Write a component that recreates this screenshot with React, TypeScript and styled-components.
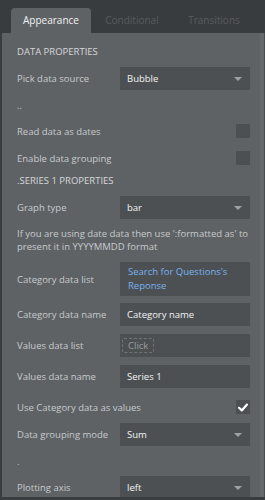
import { createGlobalStyle, styled } from 'styled-components';

const GlobalStyle = createGlobalStyle`
  html, body {
    margin: 0;
    padding: 0;
    background: #2f3234;
  }
  * {
    box-sizing: border-box;
  }
`;

const Frame = styled.div`
  width: 265px;
  height: 500px;
  overflow: hidden;
  background: #3a3d40;
  font-family: 'Open Sans', 'Noto Sans', sans-serif;
  font-size: 9.5px;
`;

const TabBar = styled.div`
  display: flex;
  align-items: flex-end;
  height: 33px;
  padding-left: 11px;
  background: #393c3f;
`;

const Tab = styled.div<{ $active?: boolean }>`
  display: flex;
  align-items: center;
  justify-content: center;
  height: 25px;
  padding-bottom: 1px;
  width: ${(p) => (p.$active ? '80px' : '82px')};
  border-radius: 4px 4px 0 0;
  background: ${(p) => (p.$active ? '#5e6265' : 'transparent')};
  color: ${(p) => (p.$active ? '#f2f2f2' : '#575b5e')};
  font-size: 10px;
`;

const Body = styled.div`
  display: flex;
  height: 464px;
  margin-left: 2px;
`;

const Panel = styled.div`
  flex: 1;
  display: flex;
  flex-direction: column;
  padding: 0 10px 0 15px;
  background: #5e6265;
  overflow: hidden;
`;

const ScrollTrack = styled.div`
  width: 5px;
  background: #66696c;
  border-right: 1px solid #4a4d50;
`;

const SectionTitle = styled.div<{ $mt: number }>`
  height: 16px;
  line-height: 16px;
  margin-top: ${(p) => p.$mt}px;
  color: #d6d8d9;
  white-space: nowrap;
`;

const Note = styled.div<{ $mt: number }>`
  height: 16px;
  line-height: 16px;
  margin-top: ${(p) => p.$mt}px;
  color: #c4c6c8;
`;

const HelpText = styled.div<{ $mt: number }>`
  margin-top: ${(p) => p.$mt}px;
  line-height: 13px;
  color: #c8cacc;
`;

const Row = styled.div<{ $mt: number }>`
  display: flex;
  align-items: center;
  margin-top: ${(p) => p.$mt}px;
`;

const Label = styled.div`
  flex: 1;
  color: #c8cacc;
  white-space: nowrap;
`;

const Field = styled.div<{ $tall?: boolean }>`
  flex-shrink: 0;
  display: flex;
  align-items: center;
  justify-content: space-between;
  width: 130px;
  height: ${(p) => (p.$tall ? '34px' : '23px')};
  padding: 0 8px 0 7px;
  background: #4c5053;
  color: #f4f4f4;
  white-space: nowrap;
`;

const Link = styled.div`
  color: #7ab2ee;
  line-height: 14px;
  padding-left: 1px;
  white-space: normal;
`;

const Caret = styled.span`
  width: 0;
  height: 0;
  border-left: 4px solid transparent;
  border-right: 4px solid transparent;
  border-top: 4px solid #9ea1a4;
  margin-top: 1px;
`;

const ClickPill = styled.span`
  margin-left: -5px;
  padding: 0 5px;
  height: 15px;
  line-height: 13px;
  border: 1px dashed #6f7376;
  border-radius: 2px;
  color: #9a9da0;
`;

const CheckBox = styled.div`
  flex-shrink: 0;
  display: flex;
  align-items: center;
  justify-content: center;
  width: 14px;
  height: 14px;
  background: #4c5053;
`;

const Select = ({ value }: { value: string }) => (
  <Field>
    <span>{value}</span>
    <Caret />
  </Field>
);

export default function App() {
  return (
    <>
      <GlobalStyle />
      <Frame>
        <TabBar>
          <Tab $active>Appearance</Tab>
          <Tab>Conditional</Tab>
          <Tab>Transitions</Tab>
        </TabBar>
        <Body>
          <Panel>
            <SectionTitle $mt={11}>DATA PROPERTIES</SectionTitle>
            <Row $mt={7}>
              <Label>Pick data source</Label>
              <Select value="Bubble" />
            </Row>
            <Note $mt={8}>..</Note>
            <Row $mt={10}>
              <Label>Read data as dates</Label>
              <CheckBox />
            </Row>
            <Row $mt={13}>
              <Label>Enable data grouping</Label>
              <CheckBox />
            </Row>
            <SectionTitle $mt={8}>.SERIES 1 PROPERTIES</SectionTitle>
            <Row $mt={7}>
              <Label>Graph type</Label>
              <Select value="bar" />
            </Row>
            <HelpText $mt={8}>
              If you are using date data then use ':formatted as' to present it in YYYYMMDD format
            </HelpText>
            <Row $mt={9}>
              <Label>Category data list</Label>
              <Field $tall>
                <Link>Search for Questions's Reponse</Link>
              </Field>
            </Row>
            <Row $mt={7}>
              <Label>Category data name</Label>
              <Field>Category name</Field>
            </Row>
            <Row $mt={8}>
              <Label>Values data list</Label>
              <Field>
                <ClickPill>Click</ClickPill>
              </Field>
            </Row>
            <Row $mt={8}>
              <Label>Values data name</Label>
              <Field>Series 1</Field>
            </Row>
            <Row $mt={12}>
              <Label>Use Category data as values</Label>
              <CheckBox>
                <svg width="10" height="9" viewBox="0 0 10 9">
                  <path d="M1 4.8 L3.8 7.4 L9 1.6" fill="none" stroke="#ffffff" strokeWidth="2.2" strokeLinecap="round" strokeLinejoin="round" />
                </svg>
              </CheckBox>
            </Row>
            <Row $mt={9}>
              <Label>Data grouping mode</Label>
              <Select value="Sum" />
            </Row>
            <Note $mt={8}>.</Note>
            <Row $mt={6}>
              <Label>Plotting axis</Label>
              <Select value="left" />
            </Row>
          </Panel>
          <ScrollTrack />
        </Body>
      </Frame>
    </>
  );
}
